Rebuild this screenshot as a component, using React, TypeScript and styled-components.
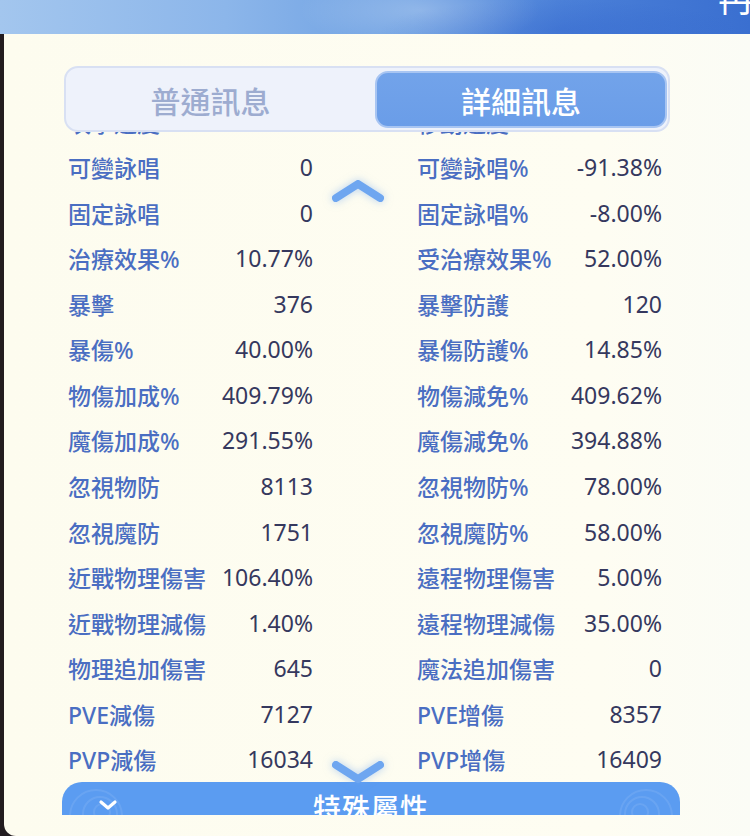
import React from "react";
import styled, { createGlobalStyle } from "styled-components";

const GlobalStyle = createGlobalStyle`
  html, body {
    margin: 0;
    padding: 0;
    background: #221c1f;
  }
  * {
    box-sizing: border-box;
  }
`;

type Stat = [string, string];

const rows: [Stat, Stat][] = [
  [["攻擊速度%", "18.21%"], ["移動速度%", "13.21%"]],
  [["可變詠唱", "0"], ["可變詠唱%", "-91.38%"]],
  [["固定詠唱", "0"], ["固定詠唱%", "-8.00%"]],
  [["治療效果%", "10.77%"], ["受治療效果%", "52.00%"]],
  [["暴擊", "376"], ["暴擊防護", "120"]],
  [["暴傷%", "40.00%"], ["暴傷防護%", "14.85%"]],
  [["物傷加成%", "409.79%"], ["物傷減免%", "409.62%"]],
  [["魔傷加成%", "291.55%"], ["魔傷減免%", "394.88%"]],
  [["忽視物防", "8113"], ["忽視物防%", "78.00%"]],
  [["忽視魔防", "1751"], ["忽視魔防%", "58.00%"]],
  [["近戰物理傷害", "106.40%"], ["遠程物理傷害", "5.00%"]],
  [["近戰物理減傷", "1.40%"], ["遠程物理減傷", "35.00%"]],
  [["物理追加傷害", "645"], ["魔法追加傷害", "0"]],
  [["PVE減傷", "7127"], ["PVE增傷", "8357"]],
  [["PVP減傷", "16034"], ["PVP增傷", "16409"]],
];

export default function App() {
  return (
    <>
      <GlobalStyle />
      <Screen>
        <HeaderBand>
          <HeaderTitle>冉</HeaderTitle>
        </HeaderBand>
        <Panel>
          <Tabs>
            <Tab>普通訊息</Tab>
            <Tab $active>詳細訊息</Tab>
          </Tabs>
          <ScrollArea>
            <StatList>
              {rows.map(([left, right], i) => (
                <StatRow key={i}>
                  <StatCell>
                    <Label>{left[0]}</Label>
                    <Value>{left[1]}</Value>
                  </StatCell>
                  <StatCell>
                    <Label>{right[0]}</Label>
                    <Value>{right[1]}</Value>
                  </StatCell>
                </StatRow>
              ))}
            </StatList>
            <SectionBar>
              <Swirl $side="left" viewBox="0 0 60 60">
                <circle cx="30" cy="30" r="26" />
                <circle cx="34" cy="28" r="17" />
                <circle cx="36" cy="26" r="8" />
              </Swirl>
              <BarChevron viewBox="0 0 20 12">
                <path d="M3 3 L10 9 L17 3" />
              </BarChevron>
              <SectionTitle>特殊屬性</SectionTitle>
              <Swirl $side="right" viewBox="0 0 60 60">
                <circle cx="30" cy="30" r="26" />
                <circle cx="26" cy="28" r="17" />
                <circle cx="24" cy="26" r="8" />
              </Swirl>
            </SectionBar>
            <ScrollHint $dir="up" viewBox="0 0 60 30">
              <path d="M8 22 L30 8 L52 22" />
            </ScrollHint>
            <ScrollHint $dir="down" viewBox="0 0 60 30">
              <path d="M8 8 L30 22 L52 8" />
            </ScrollHint>
          </ScrollArea>
        </Panel>
      </Screen>
    </>
  );
}

const Screen = styled.div`
  width: 750px;
  height: 836px;
  display: flex;
  flex-direction: column;
  overflow: hidden;
  font-family: "Noto Sans", "Noto Sans CJK TC", sans-serif;
`;

const HeaderBand = styled.div`
  height: 34px;
  flex: none;
  display: flex;
  justify-content: flex-end;
  overflow: hidden;
  background:
    radial-gradient(ellipse 120px 40px at 420px 10px, rgba(255, 255, 255, 0.25), transparent),
    radial-gradient(ellipse 180px 30px at 560px 30px, rgba(40, 90, 200, 0.3), transparent),
    linear-gradient(90deg, #a3c6ee 0%, #8cb6ea 30%, #6c9fe2 55%, #4b80d8 75%, #3a6fd0 100%);
`;

const HeaderTitle = styled.span`
  color: #ffffff;
  font-family: "Noto Sans CJK TC", sans-serif;
  font-size: 36px;
  line-height: 36px;
  margin-top: -22px;
  margin-right: -4px;
`;

const Panel = styled.div`
  flex: 1;
  margin-left: 4px;
  padding: 32px 0 0 60px;
  background: linear-gradient(90deg, #fdfcef 0%, #fefdf2 80%, #fbfcf6 100%);
  border-bottom-left-radius: 12px;
  display: flex;
  flex-direction: column;
`;

const Tabs = styled.div`
  width: 606px;
  height: 66px;
  flex: none;
  display: grid;
  grid-template-columns: 1fr 292px;
  padding: 3px 1px 2px 2px;
  border: 2px solid #d8e0f3;
  border-radius: 14px;
  background: #eef2fb;
  position: relative;
  z-index: 1;
`;

const Tab = styled.div<{ $active?: boolean }>`
  display: flex;
  align-items: center;
  justify-content: center;
  border-radius: 13px;
  font-family: "Noto Sans CJK TC", sans-serif;
  font-size: 30px;
  font-weight: 500;
  color: ${(p) => (p.$active ? "#ffffff" : "#9dacd0")};
  background: ${(p) =>
    p.$active ? "linear-gradient(180deg, #72a3ea 0%, #6a9de8 100%)" : "transparent"};
  border: ${(p) => (p.$active ? "2px solid #a8c5f2" : "none")};
  padding-right: ${(p) => (p.$active ? "0" : "22px")};
`;

const ScrollArea = styled.div`
  position: relative;
  width: 618px;
  height: 683px;
  margin-left: -2px;
  overflow: hidden;
`;

const StatList = styled.div`
  margin-top: -33px;
  padding-left: 6px;
`;

const StatRow = styled.div`
  height: 45.54px;
  display: grid;
  grid-template-columns: 245px 245px;
  column-gap: 104px;
  align-items: center;
`;

const StatCell = styled.div`
  display: flex;
  align-items: center;
  justify-content: space-between;
  white-space: nowrap;
`;

const Label = styled.span`
  font-family: "Noto Sans", "Noto Sans CJK TC", sans-serif;
  font-size: 23px;
  font-weight: 500;
  color: #4a6ec2;
`;

const Value = styled.span`
  font-family: "Noto Sans", "Noto Sans CJK TC", sans-serif;
  font-size: 23px;
  font-weight: 400;
  color: #35385e;
`;

const SectionBar = styled.div`
  position: relative;
  height: 50px;
  display: flex;
  align-items: center;
  justify-content: center;
  background: #5b9cf1;
  border-radius: 20px 20px 0 0;
  overflow: hidden;
`;

const SectionTitle = styled.span`
  font-family: "Noto Sans CJK TC", sans-serif;
  font-size: 28px;
  font-weight: 500;
  color: #ffffff;
  margin-top: 0;
  letter-spacing: 1px;
`;

const BarChevron = styled.svg`
  position: absolute;
  left: 36px;
  top: 17px;
  width: 20px;
  height: 12px;
  fill: none;
  stroke: #ffffff;
  stroke-width: 3.2;
  stroke-linecap: round;
  stroke-linejoin: round;
`;

const Swirl = styled.svg<{ $side: "left" | "right" }>`
  position: absolute;
  top: 4px;
  ${(p) => (p.$side === "left" ? "left: 4px;" : "right: 4px;")}
  width: 60px;
  height: 60px;
  fill: none;
  stroke: rgba(255, 255, 255, 0.09);
  stroke-width: 2;
`;

const ScrollHint = styled.svg<{ $dir: "up" | "down" }>`
  position: absolute;
  left: 266px;
  ${(p) => (p.$dir === "up" ? "top: 44px;" : "top: 625px;")}
  width: 60px;
  height: 30px;
  fill: none;
  stroke: #6ea6f0;
  stroke-width: 8;
  stroke-linecap: round;
  stroke-linejoin: round;
  filter: drop-shadow(0 0 4px rgba(110, 166, 240, 0.5));
`;
